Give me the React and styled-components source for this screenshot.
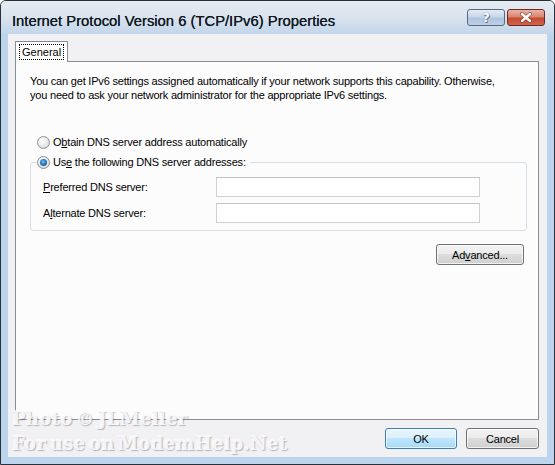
import React from 'react'
import styled, { createGlobalStyle, css } from 'styled-components'

const GlobalStyle = createGlobalStyle`
  html, body {
    margin: 0;
    padding: 0;
    background: #ffffff;
  }
  body {
    font-family: "Liberation Sans", Arial, sans-serif;
  }
`

const Window = styled.div`
  position: relative;
  width: 555px;
  height: 465px;
  box-sizing: border-box;
  border: 1px solid #27303b;
  border-radius: 6px 6px 0 0;
  background: #bcd4ec;
  display: flex;
  flex-direction: column;
  overflow: hidden;
`

const TitleBar = styled.div`
  height: 33px;
  flex: none;
  display: flex;
  align-items: center;
  padding: 0 9px 0 11px;
  background: linear-gradient(to bottom, #e6ebf2 0%, #dbe4ee 45%, #c3d6eb 100%);
`

const TitleText = styled.div`
  flex: 1;
  margin-top: 7px;
  font-family: "Liberation Sans", Arial, sans-serif;
  font-size: 14.8px;
  color: #101820;
  white-space: nowrap;
  text-shadow: 0 0 0.4px #101820;
`

const CaptionButtons = styled.div`
  display: flex;
  gap: 2px;
`

const CaptionButton = styled.div`
  width: 38px;
  height: 17px;
  box-sizing: border-box;
  border: 1px solid #596a80;
  border-radius: 3px;
  display: flex;
  align-items: center;
  justify-content: center;
  ${p => p.close ? css`
    border-color: #6e2a22;
    background: linear-gradient(to bottom, #e9b3a6 0%, #d98571 45%, #c64a33 55%, #d0644c 100%);
  ` : css`
    background: linear-gradient(to bottom, #e3ebf5 0%, #c7d7ea 45%, #aec4df 55%, #bcd1e8 100%);
  `}
`

const HelpMark = styled.span`
  font-family: "DejaVu Sans", sans-serif;
  font-weight: bold;
  font-size: 13px;
  line-height: 13px;
  color: #ffffff;
  text-shadow: 0 0 1px #4d5f78, 1px 1px 0 #6d7f98;
`

const Client = styled.div`
  flex: 1;
  margin: 0 7px 7px 7px;
  background: #f1f0f3;
  display: flex;
  flex-direction: column;
  padding: 7px 8px 8px 7px;
`

const TabStrip = styled.div`
  display: flex;
  height: 20px;
`

const Tab = styled.div`
  position: relative;
  z-index: 1;
  height: 21px;
  box-sizing: border-box;
  padding: 2px 3px 0 3px;
  border: 1px solid #898c95;
  border-bottom: none;
  background: #ffffff;
  font-size: 11px;
`

const FocusLabel = styled.span`
  display: inline-block;
  padding: 1px 2px;
  line-height: 12px;
  border: 1px dotted #000000;
  color: #000000;
`

const Panel = styled.div`
  flex: 1;
  border: 1px solid #898c95;
  background: #fdfcfd;
  padding: 12px 11px 0 14px;
  display: flex;
  flex-direction: column;
  font-size: 11px;
  color: #000000;
`

const Description = styled.p`
  margin: 0;
  line-height: 14px;
  letter-spacing: -0.2px;
`

const Options = styled.div`
  margin-top: 33px;
  display: flex;
  flex-direction: column;
  gap: 6px;
`

const RadioRow = styled.label`
  display: flex;
  align-items: center;
  gap: 3px;
  height: 14px;
  line-height: 14px;
  letter-spacing: -0.2px;
  padding-left: ${p => p.indent ? '7px' : '0'};
`

const RadioCircle = styled.span`
  width: 13px;
  height: 13px;
  box-sizing: border-box;
  border-radius: 50%;
  border: 1px solid #8f9092;
  background: radial-gradient(circle at 40% 35%, #ffffff 0%, #e9e9e9 50%, #cdcdcd 100%);
  display: flex;
  align-items: center;
  justify-content: center;
  flex: none;
  ${p => p.checked && css`
    &::after {
      content: '';
      width: 7px;
      height: 7px;
      border-radius: 50%;
      background: radial-gradient(circle at 45% 40%, #6fc1f2 0%, #2b7bc6 45%, #0e3f82 100%);
    }
  `}
`

const Group = styled.fieldset`
  margin: 0;
  width: 497px;
  box-sizing: border-box;
  border: 1px solid #d5dfe5;
  border-radius: 3px;
  padding: 8px 10px 7px 12px;
  display: flex;
  flex-direction: column;
  gap: 6px;
`

const Legend = styled.legend`
  margin-left: -6px;
  padding: 0 4px 0 0;
  line-height: 14px;
`

const FieldRow = styled.div`
  display: flex;
  align-items: center;
  height: 20px;
`

const FieldLabel = styled.span`
  width: 173px;
  letter-spacing: -0.2px;
`

const TextBox = styled.div`
  width: 264px;
  height: 20px;
  box-sizing: border-box;
  border: 1px solid #d0d0d0;
  border-top-color: #c4c4c4;
  background: #ffffff;
`

const ButtonRow = styled.div`
  display: flex;
  justify-content: flex-end;
  gap: 9px;
  padding-right: ${p => p.inset || '0'};
  margin-top: ${p => p.top || '0'};
`

const Button = styled.div`
  width: ${p => p.w || '72px'};
  height: 21px;
  box-sizing: border-box;
  border: 1px solid #707070;
  border-radius: 3px;
  display: flex;
  align-items: center;
  justify-content: center;
  font-size: 11px;
  color: #000000;
  letter-spacing: -0.2px;
  background: linear-gradient(to bottom, #f3f3f3 0%, #ebebeb 49%, #dddddd 50%, #cfcfcf 100%);
  box-shadow: inset 0 0 0 1px rgba(255, 255, 255, 0.7);
  ${p => p.primary && css`
    border-color: #3c7fb1;
    background: linear-gradient(to bottom, #eaf6fd 0%, #d9f0fc 49%, #bee6fd 50%, #a7d9f5 100%);
  `}
`

const Watermark = styled.div`
  position: absolute;
  left: 11px;
  top: 405px;
  font-family: "DejaVu Serif", "Liberation Serif", serif;
  font-weight: bold;
  font-size: 18px;
  line-height: 25px;
  letter-spacing: 0.3px;
  word-spacing: -3px;
  color: rgba(250, 250, 252, 0.92);
  text-shadow: 1px 1px 1px rgba(90, 90, 100, 0.4), -1px -1px 0 rgba(255, 255, 255, 0.6);
  pointer-events: none;
  white-space: nowrap;
`

const CloseGlyph = () => (
  <svg width="14" height="11" viewBox="0 0 14 11">
    <path d="M3 2 L11 9 M11 2 L3 9" stroke="#7a2a20" strokeWidth="4" strokeLinecap="round" opacity="0.6" />
    <path d="M3 2 L11 9 M11 2 L3 9" stroke="#ffffff" strokeWidth="2.4" strokeLinecap="round" />
  </svg>
)

const App = () => (
  <>
    <GlobalStyle />
    <Window>
      <TitleBar>
        <TitleText>Internet Protocol Version 6 (TCP/IPv6) Properties</TitleText>
        <CaptionButtons>
          <CaptionButton><HelpMark>?</HelpMark></CaptionButton>
          <CaptionButton close><CloseGlyph /></CaptionButton>
        </CaptionButtons>
      </TitleBar>
      <Client>
        <TabStrip>
          <Tab><FocusLabel>General</FocusLabel></Tab>
        </TabStrip>
        <Panel>
          <Description>
            You can get IPv6 settings assigned automatically if your network supports this capability. Otherwise,
            <br />
            you need to ask your network administrator for the appropriate IPv6 settings.
          </Description>
          <Options>
            <RadioRow indent>
              <RadioCircle />
              <span>O<u>b</u>tain DNS server address automatically</span>
            </RadioRow>
            <Group>
              <Legend>
                <RadioRow>
                  <RadioCircle checked />
                  <span>Us<u>e</u> the following DNS server addresses:</span>
                </RadioRow>
              </Legend>
              <FieldRow>
                <FieldLabel><u>P</u>referred DNS server:</FieldLabel>
                <TextBox />
              </FieldRow>
              <FieldRow>
                <FieldLabel>A<u>l</u>ternate DNS server:</FieldLabel>
                <TextBox />
              </FieldRow>
            </Group>
          </Options>
          <ButtonRow inset="3px" top="13px">
            <Button w="88px">Ad<u>v</u>anced...</Button>
          </ButtonRow>
        </Panel>
        <ButtonRow top="8px">
          <Button primary>OK</Button>
          <Button w="73px">Cancel</Button>
        </ButtonRow>
      </Client>
      <Watermark>
        Photo © JLMeller
        <br />
        For use on ModemHelp.Net
      </Watermark>
    </Window>
  </>
)

export default App
